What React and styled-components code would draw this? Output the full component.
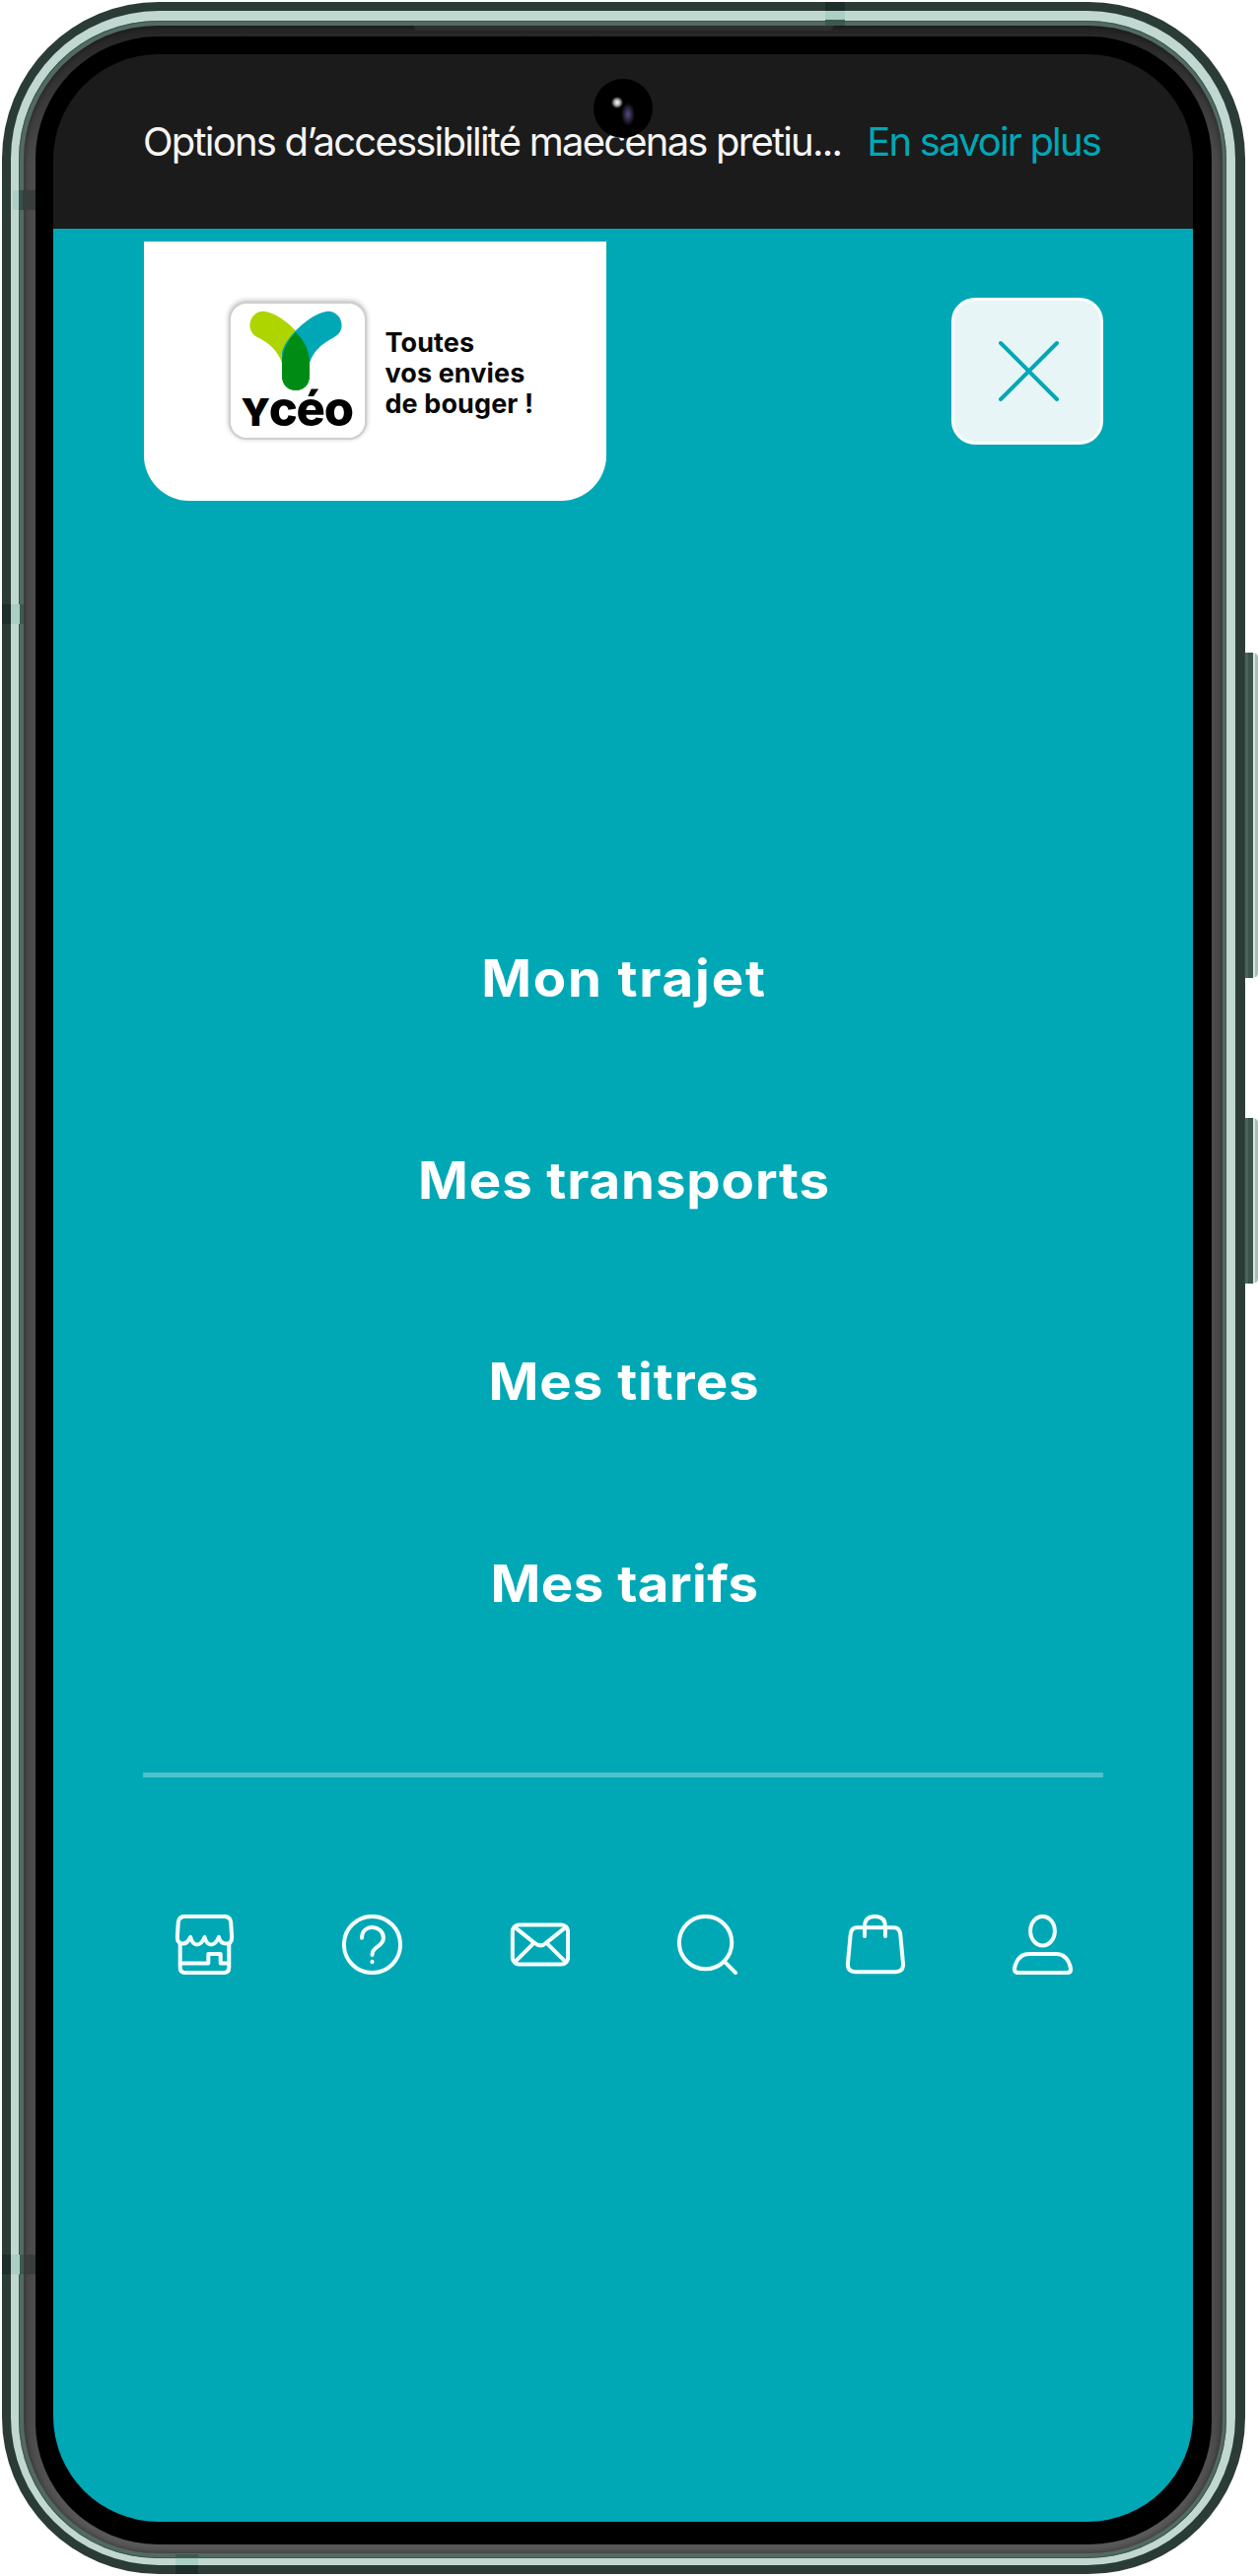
import React from "react";
import styled, { createGlobalStyle } from "styled-components";

const Global = createGlobalStyle`
  * { box-sizing: border-box; }
  body { margin: 0; background: #fff; }
`;

const teal = "#00a8b6";

const Stage = styled.div`
  position: relative;
  width: 1276px;
  height: 2613px;
  padding: 1.5px 0 0 1.5px;
  overflow: hidden;
  font-family: Inter, "Liberation Sans", sans-serif;
`;
const Shell = styled.div`
  width: 1261px;
  height: 2609.5px;
  padding: 9.5px 9.5px 9px 9px;
  border-radius: 159px;
  background: #2b3c37;
`;
const Rim = styled.div`
  height: 100%;
  padding: 9.5px 9px 7px 8.5px;
  border-radius: 150px;
  background: #c0d8d1;
`;
const InnerRim = styled.div`
  height: 100%;
  padding: 5px 4.5px 5px 5px;
  border-radius: 141px;
  background: #526b62;
  box-shadow: inset 0 0 0 1px #3f554d;
`;
const Groove = styled.div`
  height: 100%;
  padding: 11.8px 11px 9.3px 12px;
  border-radius: 136px;
  background: linear-gradient(#252525 0, #4c4c4c 140px, #4c4c4c 2440px, #5a5a5a 2540px);
  box-shadow: inset 0 0 7px rgba(0, 0, 0, 0.5);
`;
const Bezel = styled.div`
  height: 100%;
  padding: 17.7px 18.5px 23px 18px;
  border-radius: 124px;
  background: #000;
`;
const Screen = styled.div`
  height: 100%;
  display: flex;
  flex-direction: column;
  border-radius: 107px;
  overflow: hidden;
  background: linear-gradient(#1b1b1b 0 177px, ${teal} 177px);
`;
const Notice = styled.div`
  flex: none;
  height: 177px;
  padding: 65px 94px 0 91px;
  display: flex;
  justify-content: space-between;
  line-height: 48px;
  font-size: 40px;
  white-space: nowrap;
`;
const NoticeText = styled.span`
  color: #f5f5f5;
  letter-spacing: -1.79px;
`;
const NoticeLink = styled.a`
  color: ${teal};
  letter-spacing: -1.85px;
`;
const Header = styled.header`
  display: flex;
  justify-content: space-between;
  padding: 13px 91px 0 91.5px;
`;
const Brand = styled.div`
  width: 469px;
  height: 263px;
  padding: 63px 0 0 88px;
  display: flex;
  gap: 21px;
  border-radius: 0 0 46px 46px;
  background: #fff;
`;
const Badge = styled.div`
  width: 136px;
  height: 136px;
  padding: 6px 0 0 10px;
  border-radius: 16px;
  background: #fff;
  box-shadow: 0 0 0 2px #cfcfcf, 0 -1px 5px 2px rgba(0, 0, 0, 0.28);
`;
const Emblem = styled.svg`
  display: block;
  width: 112px;
  height: 84px;
`;
const BadgeName = styled.div`
  margin: -5px 0 0 1px;
  font: 800 49px/43px Inter, sans-serif;
  letter-spacing: -1.3px;
  white-space: nowrap;
`;
const SmallCap = styled.span`
  font-size: 38px;
  font-weight: 900;
`;
const Slogan = styled.div`
  padding-top: 24px;
  font: 700 27px/31px Inter, sans-serif;
  letter-spacing: 0.1px;
  white-space: nowrap;
  color: #080808;
`;
const Close = styled.button`
  width: 154px;
  height: 149px;
  margin-top: 57px;
  padding: 0 0 0 1px;
  display: grid;
  place-items: center;
  border: 3px solid #fbffff;
  border-radius: 24px;
  background: #e8f5f6;
`;
const Menu = styled.nav`
  margin-top: 434px;
  display: flex;
  flex-direction: column;
  align-items: center;
`;
const MenuLink = styled.a`
  height: 204.6px;
  padding-left: 2px;
  line-height: 102px;
  font-size: 52px;
  font-weight: 700;
  letter-spacing: ${(p) => p.$track}px;
  color: #fff;
  transform: scaleX(1.05);
`;
const Divider = styled.hr`
  flex: none;
  width: 974px;
  height: 5px;
  margin: 38px 0 0 91px;
  border: 0;
  background: #4dc2cc;
`;
const Shortcuts = styled.div`
  display: flex;
  justify-content: space-between;
  padding: 139px 121.5px 0 123px;
`;
const Glyph = styled.svg`
  display: block;
  width: 61px;
  height: 61px;
  fill: none;
  stroke: #f4fefe;
  stroke-width: 4.2;
  stroke-linecap: round;
  stroke-linejoin: round;
`;
const Camera = styled.div`
  position: absolute;
  left: 602px;
  top: 80px;
  width: 60px;
  height: 60px;
  border-radius: 50%;
  background:
    radial-gradient(circle at 24px 24px, #fff 0, #aaa 3px, transparent 6px),
    radial-gradient(ellipse 7px 12px at 35px 36px, #5a4b80, transparent),
    #000;
`;
const Earpiece = styled.div`
  position: absolute;
  left: 420px;
  top: 26px;
  width: 425px;
  height: 5px;
  border-radius: 0 0 4px 4px;
  background: #2e2e2e;
`;
const SideKey = styled.div`
  position: absolute;
  left: 1262px;
  top: ${(p) => p.$top}px;
  width: 14px;
  height: ${(p) => p.$height}px;
  border-radius: 0 5px 5px 0;
  background: linear-gradient(90deg, #304840 0 1px, #4a645b 1px 4px, #3a5249 4px 9px, #d5e8e2 9px 11px, #a9bdb6 11px);
`;
const Band = styled.div`
  position: absolute;
  left: ${(p) => p.$x}px;
  top: ${(p) => p.$y}px;
  width: ${(p) => p.$w}px;
  height: ${(p) => p.$h}px;
  background: linear-gradient(${(p) => p.$dir}deg, ${(p) => p.$stops});
`;

const icons = [
  ["Agences", <>
    <path d="M11 2h42q6 0 7 6l1 16q0 7-6 7-6 0-8-7-3 8-8 8-5 0-7-8-3 8-8 8-5 0-7-8-3 7-8 7-6 0-6-7L4 8q1-6 7-6Z" />
    <path d="M6 31v25q0 6 6 6h40q6 0 6-6V31M6 52h30V42h13v10h9" />
  </>],
  ["Aide", <>
    <circle cx="32" cy="32" r="30" />
    <path d="M21 25c0-16 23-14 23 0 0 10-12 8-12 18" />
    <path d="M32 50v.5" />
  </>],
  ["Contact", <>
    <rect x="3" y="11" width="59" height="42" rx="7" />
    <path d="m6 14 20 16q7 6 13 0l20-16M6 50l19-19M59 50 40 31" />
  </>],
  ["Recherche", <>
    <circle cx="30" cy="30" r="28" />
    <path d="m50 50 12 12" />
  </>],
  ["Boutique", <>
    <path d="M13 14h39q6 0 7 7l3 32q0 8-8 8H11q-8 0-8-8l3-32q1-7 7-7Z" />
    <path d="M21 23V13q0-11 11-11t11 11v10" />
  </>],
  ["Compte", <>
    <ellipse cx="32" cy="17.5" rx="13" ry="15.5" />
    <path d="M18 42h28q13 0 16 16 0 4-4 4H6q-4 0-4-4 3-16 16-16Z" />
  </>],
];

const menu = [
  ["Mon trajet", 1.7],
  ["Mes transports", 0.8],
  ["Mes titres", 0.9],
  ["Mes tarifs", 0.4],
];

const edge = "#1e2e2a 0 9px, #abcfc5 9px 18px, #3d5a50 18px";
const edgeInner = "#abcfc5 0 6px, #35504a 6px 10px, #393d3b 10px";
const edgeBottom = "#3d5a50 0 4px, #abcfc5 4px 11px, #1e2e2a 11px";

export default function App() {
  return (
    <Stage>
      <Global />
      <Shell><Rim><InnerRim><Groove><Bezel>
        <Screen>
          <Notice>
            <NoticeText>Options d’accessibilité maecenas pretiu...</NoticeText>
            <NoticeLink>En savoir plus</NoticeLink>
          </Notice>
          <Header>
            <Brand>
              <Badge>
                <Emblem viewBox="0 0 112 84">
                  <path d="M25 2C10 0 3 21 17 28q19 9 25 26v13c0 20 28 20 28 0V44C68 30 43 5 25 2Z" fill="#aed500" />
                  <path d="M87 2c15-2 22 19 8 26-15 8-21 15-25 26v13c0 20-28 20-28 0V44C44 30 69 5 87 2Z" fill="#00a8b6" />
                  <path d="M56 23Q68 34 70 51v16c0 20-28 20-28 0V51Q44 34 56 23Z" fill="#008c14" />
                </Emblem>
                <BadgeName><SmallCap>Y</SmallCap>céo</BadgeName>
              </Badge>
              <Slogan>Toutes<br />vos envies<br />de bouger{"\u00a0"}!</Slogan>
            </Brand>
            <Close aria-label="Fermer">
              <svg width="64" height="64" fill="none" stroke={teal} strokeWidth="4" strokeLinecap="round">
                <path d="m4 4 57 57M61 4 4 61" />
              </svg>
            </Close>
          </Header>
          <Menu>
            {menu.map(([label, track]) => <MenuLink key={label} $track={track}>{label}</MenuLink>)}
          </Menu>
          <Divider />
          <Shortcuts>
            {icons.map(([name, art]) => <Glyph key={name} viewBox="0 0 64 64" aria-label={name}>{art}</Glyph>)}
          </Shortcuts>
        </Screen>
      </Bezel></Groove></InnerRim></Rim></Shell>
      <Earpiece />
      <Camera />
      <SideKey $top={662} $height={330} />
      <SideKey $top={1134} $height={168} />
      <Band $x={837} $y={2} $w={20} $h={24} $dir={180} $stops={edge} />
      <Band $x={13} $y={193} $w={23} $h={20} $dir={90} $stops={edgeInner} />
      <Band $x={2} $y={613} $w={22} $h={20} $dir={90} $stops={edge} />
      <Band $x={2} $y={2287} $w={34} $h={20} $dir={90} $stops={`${edge} 22px, #393d3b 22px`} />
      <Band $x={178} $y={2591} $w={23} $h={20} $dir={180} $stops={edgeBottom} />
    </Stage>
  );
}
